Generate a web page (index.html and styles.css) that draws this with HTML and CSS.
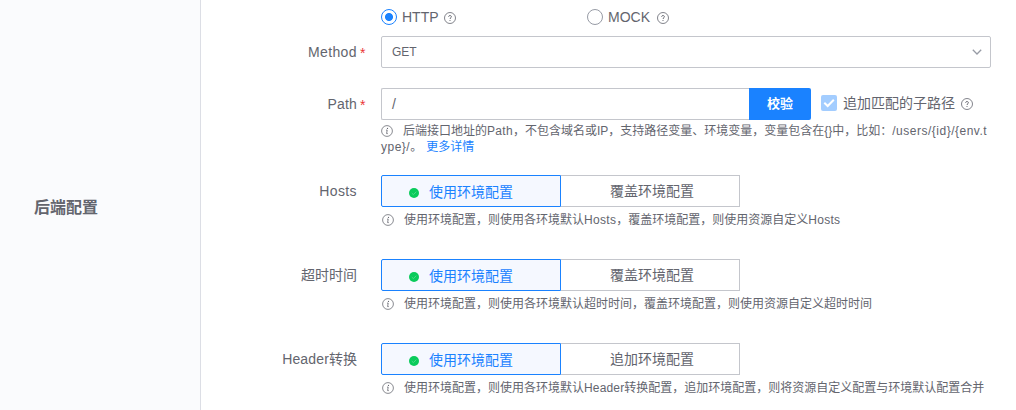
FILE: index.html
```html
<!DOCTYPE html>
<html lang="zh-CN">
<head>
<meta charset="utf-8">
<title>后端配置</title>
<link rel="stylesheet" href="styles.css">
</head>
<body>
<svg class="symbols" aria-hidden="true">
  <symbol id="help" viewBox="0 0 12 12"><circle cx="6" cy="6" r="5.5" fill="none" stroke="currentColor" stroke-width=".8"/><path d="M4.6 4.8C4.6 3.1 7.4 3.1 7.4 4.7C7.4 5.7 6 5.8 6 7" fill="none" stroke="currentColor" stroke-width=".95"/><circle cx="6" cy="8.5" r=".6" fill="currentColor"/></symbol>
  <symbol id="info" viewBox="0 0 12 12"><circle cx="6" cy="6" r="5.4" fill="none" stroke="currentColor" stroke-width=".75"/><path d="M5 5.1H6.2L5.6 8.6H6.8" fill="none" stroke="currentColor" stroke-width=".8"/><circle cx="6.5" cy="3.4" r=".6" fill="currentColor"/></symbol>
  <symbol id="done" viewBox="0 0 10 10"><circle cx="5" cy="5" r="5" fill="#0acb5b"/><path d="M2.8 5.1L4.4 6.6L7.3 3.7" fill="none" stroke="#8be5ae" stroke-width=".5"/></symbol>
</svg>
<div class="panel">
  <aside class="side">后端配置</aside>
  <main class="form">
    <div class="row types">
      <div class="label"></div>
      <div class="control">
        <label class="radio"><i class="ring checked"></i><span class="http">HTTP</span><svg class="help"><use href="#help"/></svg></label>
        <label class="radio"><i class="ring"></i><span class="mock">MOCK</span><svg class="help"><use href="#help"/></svg></label>
      </div>
    </div>
    <div class="row method">
      <div class="label required latin">Method</div>
      <div class="select"><span>GET</span><svg class="arrow" viewBox="0 0 10 6"><path d="M.8 .8L5 5L9.2 .8" fill="none" stroke="#979ba5" stroke-width="1.3"/></svg></div>
    </div>
    <div class="row path">
      <div class="label required path-label">Path</div>
      <div class="field">
        <div class="control">
          <div class="input">/</div>
          <div class="verify">校验</div>
          <div class="checkbox"><svg viewBox="0 0 16 16"><path d="M3.3 7.7L6.7 11L12.8 4.8" fill="none" stroke="#fff" stroke-width="2"/></svg></div>
          <span class="append">追加匹配的子路径</span>
          <svg class="help"><use href="#help"/></svg>
        </div>
        <div class="tip wide"><svg class="info"><use href="#info"/></svg><span>后端接口地址的<span class="latin">Path</span>，不包含域名或IP，支持路径变量、环境变量，变量包含在{}中，比如：<span class="url">/users/{id}/{env.t</span></span><br><span class="url">ype}/</span>。<a class="more">更多详情</a></div>
      </div>
    </div>
    <div class="row switch">
      <div class="label latin">Hosts</div>
      <div class="field">
        <div class="control"><div class="option active"><svg class="done"><use href="#done"/></svg>使用环境配置</div><div class="option">覆盖环境配置</div></div>
        <div class="tip"><svg class="info"><use href="#info"/></svg><span>使用环境配置，则使用各环境默认<span class="latin">Hosts</span>，覆盖环境配置，则使用资源自定义<span class="latin">Hosts</span></span></div>
      </div>
    </div>
    <div class="row switch">
      <div class="label">超时时间</div>
      <div class="field">
        <div class="control"><div class="option active"><svg class="done"><use href="#done"/></svg>使用环境配置</div><div class="option">覆盖环境配置</div></div>
        <div class="tip"><svg class="info"><use href="#info"/></svg><span>使用环境配置，则使用各环境默认超时时间，覆盖环境配置，则使用资源自定义超时时间</span></div>
      </div>
    </div>
    <div class="row switch">
      <div class="label"><span class="header">Header</span>转换</div>
      <div class="field">
        <div class="control"><div class="option active"><svg class="done"><use href="#done"/></svg>使用环境配置</div><div class="option">追加环境配置</div></div>
        <div class="tip"><svg class="info"><use href="#info"/></svg><span>使用环境配置，则使用各环境默认<span class="header">Header</span>转换配置，追加环境配置，则将资源自定义配置与环境默认配置合并</span></div>
      </div>
    </div>
  </main>
</div>
</body>
</html>
```
FILE: styles.css
```css
* { box-sizing: border-box; }
body { margin: 0; background: #fff; color: #63656e; font: 14px/32px "Liberation Sans", "Noto Sans CJK SC", sans-serif; overflow: hidden; }
svg { flex: none; }
.symbols { display: none; }
.panel { display: flex; height: 410px; }
.side { width: 201px; flex: none; padding: 5px 0 0 34px; display: flex; align-items: center; background: #fafbfd; border-right: 1px solid #dcdee5; font-size: 16px; font-weight: 700; }
.form { flex: 1; display: flex; flex-direction: column; padding-top: 1px; }
.row { flex: none; display: grid; grid-template-columns: 156px 610px; column-gap: 24px; white-space: nowrap; }
.label { text-align: right; position: relative; height: 32px; }
.latin { letter-spacing: .3px; }
.label.latin { letter-spacing: .4px; }
.path-label { letter-spacing: .15px; }
.header { letter-spacing: .15px; }
.url { letter-spacing: .5px; }
.required::after { content: "*"; position: absolute; left: 100%; margin-left: 3px; top: 1px; color: #ea3636; font-size: 14px; }
.types { height: 35px; }
.control { display: flex; height: 32px; align-items: center; }
.radio { display: flex; align-items: center; width: 206px; }
.ring { width: 16px; height: 16px; border: 1px solid #979ba5; border-radius: 50%; margin-right: 5px; }
.checked { border-color: #1a82ff; background: radial-gradient(circle, #1a82ff 3.6px, #fff 4.4px); }
.help { width: 12px; height: 12px; margin-left: 5px; margin-top: 2px; }
.http { width: 37px; }
.mock { width: 44px; }
.method { height: 52px; }
.select { display: flex; justify-content: space-between; align-items: center; height: 32px; padding: 0 8px 0 10px; border: 1px solid #c4c6cc; border-radius: 2px; font-size: 12px; line-height: 30px; }
.arrow { width: 10px; height: 6px; }
.path { height: 87px; }
.input { width: 368px; height: 32px; padding-left: 10px; line-height: 30px; border: 1px solid #c4c6cc; border-right: 0; border-radius: 2px 0 0 2px; }
.verify { width: 62px; height: 32px; border-radius: 0 2px 2px 0; background: #1a82ff; color: #fff; font-size: 13px; font-weight: 700; text-align: center; }
.checkbox { width: 16px; height: 16px; margin: -2px 6px 0 10px; border-radius: 2px; background: #a3cdff; }
.checkbox svg { display: block; width: 16px; height: 16px; }
.append { line-height: 30px; margin-top: -2px; }
.append + .help { margin: 0 0 0 6px; }
.tip { margin-top: 5px; padding-left: 1px; font-size: 12px; line-height: 16px; }
.wide { margin-top: 3px; padding-left: 0; }
.info { width: 12px; height: 12px; margin-right: 10px; vertical-align: -2px; }
.more { color: #1a82ff; margin-left: 4px; }
.switch { height: 84px; }
.option { display: flex; justify-content: center; align-items: center; width: 179px; height: 32px; padding-left: 4px; border: 1px solid #c4c6cc; border-left: 0; line-height: 30px; }
.active { width: 180px; padding: 2px 20px 0 0; border: 1px solid #1a82ff; border-radius: 2px 0 0 2px; background: #f5f8ff; color: #1a82ff; }
.done { width: 10px; height: 10px; margin: 1px 10px 0 0; }
```
